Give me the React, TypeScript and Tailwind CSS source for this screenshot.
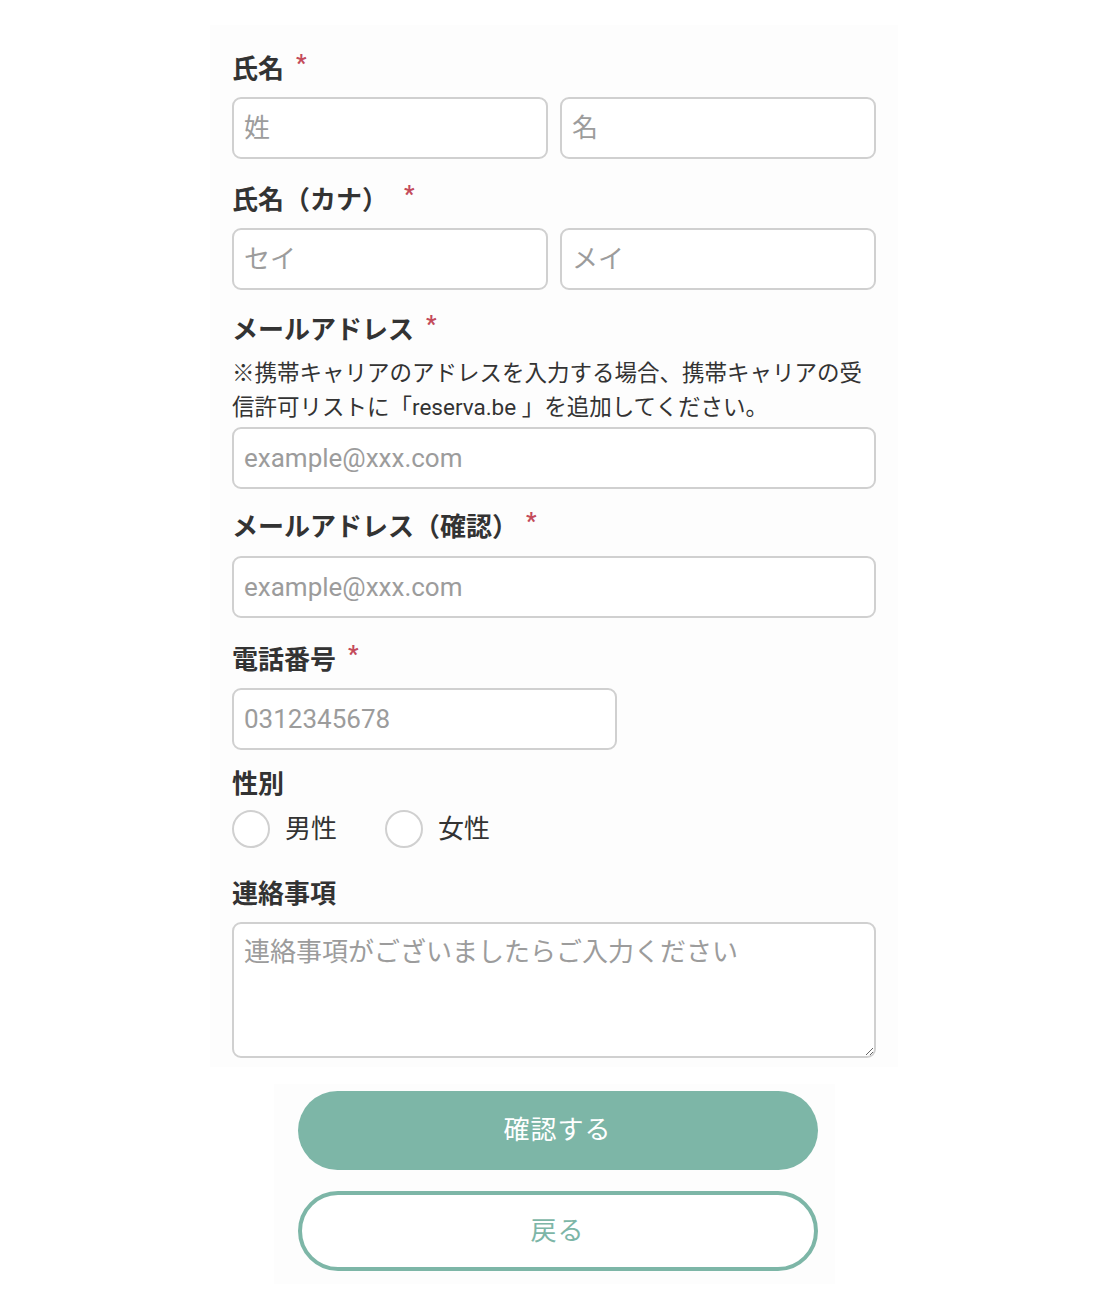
// Reservation customer-info form: name, kana, email (x2), phone, gender, notes.

type LabelProps = {
  text: string;
  required?: boolean;
  starGap?: string;
};

function FieldLabel({ text, required, starGap = "ml-[12px]" }: LabelProps) {
  return (
    <div className="flex items-start">
      <span className="text-[26px] font-bold leading-[36px] text-[#333]">{text}</span>
      {required && (
        <span className={`${starGap} mt-[1px] text-[23px] font-bold leading-none text-[#c44b5b]`}>*</span>
      )}
    </div>
  );
}

function TextInput({ placeholder, className = "" }: { placeholder: string; className?: string }) {
  return (
    <input
      type="text"
      placeholder={placeholder}
      className={`h-[62px] rounded-[9px] border-2 border-[#d0d0d0] bg-white px-[10px] text-[26px] text-[#333] outline-none placeholder:text-[#9c9c9c] ${className}`}
    />
  );
}

function Radio({ label }: { label: string }) {
  return (
    <label className="flex items-center">
      <span className="h-[38px] w-[38px] rounded-full border-2 border-[#d0d0d0] bg-white" />
      <span className="ml-[15px] text-[26px] leading-[38px] text-[#333]">{label}</span>
    </label>
  );
}

export default function App() {
  return (
    <div className="min-h-[1300px] bg-white pt-[25px] font-['Roboto','Noto_Sans_CJK_JP',sans-serif]">
      <form className="mx-auto w-[688px] bg-[#fdfdfd] px-[22px] pt-[26px] pb-[9px]">
        {/* 氏名 */}
        <FieldLabel text="氏名" required />
        <div className="mt-[10px] grid grid-cols-2 gap-[12px]">
          <TextInput placeholder="姓" className="w-full" />
          <TextInput placeholder="名" className="w-full" />
        </div>

        {/* 氏名（カナ） */}
        <div className="mt-[23px]">
          <FieldLabel text="氏名（カナ）" required starGap="ml-[16px]" />
        </div>
        <div className="mt-[10px] grid grid-cols-2 gap-[12px]">
          <TextInput placeholder="セイ" className="w-full" />
          <TextInput placeholder="メイ" className="w-full" />
        </div>

        {/* メールアドレス */}
        <div className="mt-[22px]">
          <FieldLabel text="メールアドレス" required />
        </div>
        <p className="mt-[8px] text-[22.5px] leading-[34px] text-[#333]">
          ※携帯キャリアのアドレスを入力する場合、携帯キャリアの受信許可リストに「reserva.be 」を追加してください。
        </p>
        <TextInput placeholder="example@xxx.com" className="mt-[3px] block w-full" />

        {/* メールアドレス（確認） */}
        <div className="mt-[20px]">
          <FieldLabel text="メールアドレス（確認）" required starGap="ml-[8px]" />
        </div>
        <TextInput placeholder="example@xxx.com" className="mt-[11px] block w-full" />

        {/* 電話番号 */}
        <div className="mt-[24px]">
          <FieldLabel text="電話番号" required />
        </div>
        <TextInput placeholder="0312345678" className="mt-[10px] block w-[385px]" />

        {/* 性別 */}
        <div className="mt-[16px]">
          <FieldLabel text="性別" />
        </div>
        <div className="mt-[8px] flex gap-[48px]">
          <Radio label="男性" />
          <Radio label="女性" />
        </div>

        {/* 連絡事項 */}
        <div className="mt-[28px]">
          <FieldLabel text="連絡事項" />
        </div>
        <textarea
          placeholder="連絡事項がございましたらご入力ください"
          className="mt-[10px] block h-[136px] w-full rounded-[9px] border-2 border-[#d0d0d0] bg-white px-[10px] pt-[10px] text-[26px] leading-[36px] text-[#333] outline-none placeholder:text-[#9c9c9c]"
        />
      </form>

      <div className="mx-auto mt-[17px] flex w-[561px] flex-col gap-[21px] bg-[#fdfdfd] pl-[24px] pr-[17px] pt-[7px] pb-[13px]">
        <button
          type="button"
          className="h-[79px] w-full rounded-full bg-[#7db6a7] text-[26px] tracking-[1px] text-white"
        >
          確認する
        </button>
        <button
          type="button"
          className="h-[80px] w-full rounded-full border-4 border-[#7db6a7] bg-white text-[26px] tracking-[1px] text-[#7db6a7]"
        >
          戻る
        </button>
      </div>
    </div>
  );
}
